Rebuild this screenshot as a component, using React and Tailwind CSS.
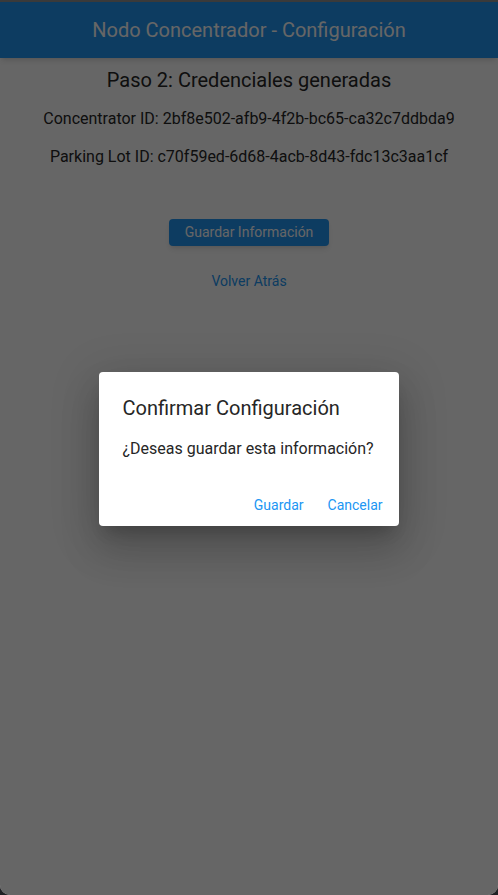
import React from "react";

const App = () => {
  return (
    <div className="h-[895px] w-[498px] bg-[#202124] flex flex-col font-['Roboto',sans-serif]">
      <div className="h-[2px] bg-[#3a3a3a]" />
      <div className="relative flex-1 bg-white rounded-b-[10px] overflow-hidden">
        {/* App bar */}
        <div className="h-[56px] bg-[#2196F3] flex items-center justify-center shadow-md">
          <h1 className="text-[20px] text-white">Nodo Concentrador - Configuración</h1>
        </div>

        {/* Body */}
        <div className="flex flex-col items-center text-[#262626]">
          <h2 className="mt-[8px] text-[20px] leading-[28px]">Paso 2: Credenciales generadas</h2>
          <p className="mt-[13px] text-[16px] leading-[24px]">
            Concentrator ID: 2bf8e502-afb9-4f2b-bc65-ca32c7ddbda9
          </p>
          <p className="mt-[14px] text-[16px] leading-[24px]">
            Parking Lot ID: c70f59ed-6d68-4acb-8d43-fdc13c3aa1cf
          </p>
          <button className="mt-[50px] h-[27px] px-[16px] rounded-[4px] bg-[#2196F3] text-white text-[14px] shadow-md">
            Guardar Información
          </button>
          <button className="mt-[25px] text-[14px] text-[#2196F3]">Volver Atrás</button>
        </div>

        {/* Modal barrier */}
        <div className="absolute inset-0 bg-black/60 flex items-start justify-center">
          <div className="mt-[370px] mr-[1px] w-[300px] bg-white rounded-[4px] shadow-[0_11px_15px_-7px_rgba(0,0,0,0.2),0_24px_38px_3px_rgba(0,0,0,0.14),0_9px_46px_8px_rgba(0,0,0,0.12)]">
            <div className="px-[24px] pt-[24px]">
              <h3 className="text-[20px] leading-[24px] text-[#262626]">Confirmar Configuración</h3>
              <p className="mt-[19px] text-[16px] leading-[20px] text-[#262626] whitespace-nowrap">
                ¿Deseas guardar esta información?
              </p>
            </div>
            <div className="mt-[33px] flex justify-end gap-[8px] px-[8px] pb-[8px]">
              <button className="h-[26px] px-[8px] text-[14px] text-[#2196F3]">Guardar</button>
              <button className="h-[26px] px-[8px] text-[14px] text-[#2196F3]">Cancelar</button>
            </div>
          </div>
        </div>
      </div>
    </div>
  );
};

export default App;
